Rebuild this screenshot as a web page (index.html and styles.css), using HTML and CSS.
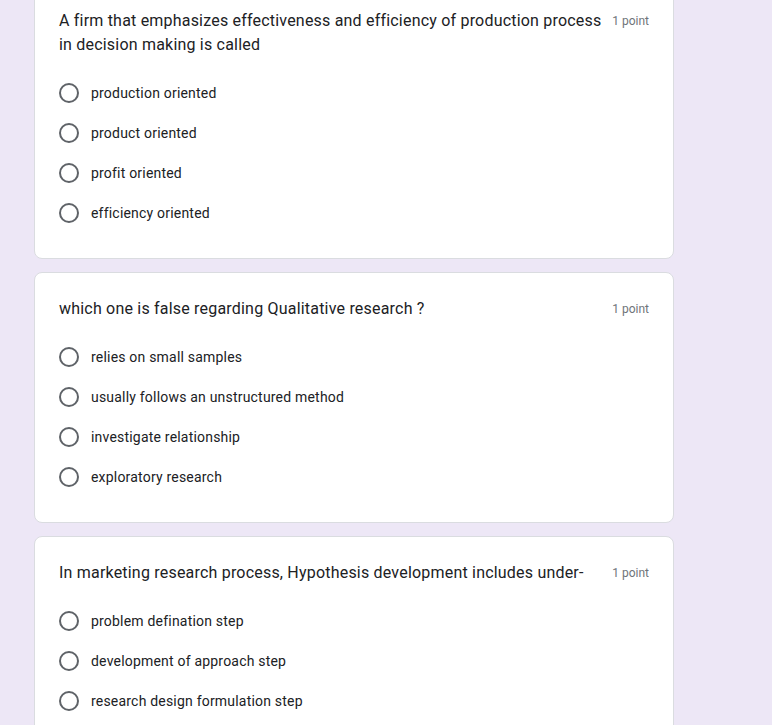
FILE: index.html
```html
<!DOCTYPE html>
<html>
<head>
<meta charset="utf-8">
<link rel="stylesheet" href="styles.css">
</head>
<body>
<div class="list">
  <div class="card">
    <div class="q-head">
      <div class="q-title">A firm that emphasizes effectiveness and efficiency of production process in decision making is called</div>
      <div class="q-points">1 point</div>
    </div>
    <div class="options">
      <div class="opt"><span class="radio"></span><span class="label">production oriented</span></div>
      <div class="opt"><span class="radio"></span><span class="label">product oriented</span></div>
      <div class="opt"><span class="radio"></span><span class="label">profit oriented</span></div>
      <div class="opt"><span class="radio"></span><span class="label">efficiency oriented</span></div>
    </div>
  </div>
  <div class="card">
    <div class="q-head">
      <div class="q-title">which one is false regarding Qualitative research ?</div>
      <div class="q-points">1 point</div>
    </div>
    <div class="options">
      <div class="opt"><span class="radio"></span><span class="label">relies on small samples</span></div>
      <div class="opt"><span class="radio"></span><span class="label">usually follows an unstructured method</span></div>
      <div class="opt"><span class="radio"></span><span class="label">investigate relationship</span></div>
      <div class="opt"><span class="radio"></span><span class="label">exploratory research</span></div>
    </div>
  </div>
  <div class="card">
    <div class="q-head">
      <div class="q-title">In marketing research process, Hypothesis development includes under-</div>
      <div class="q-points">1 point</div>
    </div>
    <div class="options">
      <div class="opt"><span class="radio"></span><span class="label">problem defination step</span></div>
      <div class="opt"><span class="radio"></span><span class="label">development of approach step</span></div>
      <div class="opt"><span class="radio"></span><span class="label">research design formulation step</span></div>
    </div>
  </div>
</div>
</body>
</html>
```
FILE: styles.css
```css
html, body {
  margin: 0;
  padding: 0;
  background: #ede7f6;
  overflow: hidden;
}
body {
  font-family: Roboto, "Liberation Sans", Arial, sans-serif;
  color: #202124;
}
.list {
  display: flex;
  flex-direction: column;
  gap: 13px;
  width: 640px;
  margin-left: 34px;
  margin-top: -16px;
}
.card {
  background: #fff;
  border: 1px solid #dadce0;
  border-radius: 8px;
  padding: 24px 24px 25px;
}
.q-head {
  display: flex;
  align-items: flex-start;
  gap: 10px;
}
.q-title {
  flex: 1;
  font-family: Roboto, "Liberation Sans", sans-serif;
  font-size: 16px;
  line-height: 24px;
  letter-spacing: 0.2px;
  color: #202124;
}
.q-points {
  flex: none;
  font-size: 12px;
  line-height: 24px;
  color: #70757a;
}
.options {
  margin-top: 16px;
  display: flex;
  flex-direction: column;
}
.opt {
  display: flex;
  align-items: center;
  height: 40px;
}
.radio {
  box-sizing: border-box;
  width: 20px;
  height: 20px;
  border: 2px solid #5f6368;
  border-radius: 50%;
  flex: none;
}
.label {
  margin-left: 12px;
  font-size: 14px;
  letter-spacing: 0.2px;
  color: #202124;
}
```
